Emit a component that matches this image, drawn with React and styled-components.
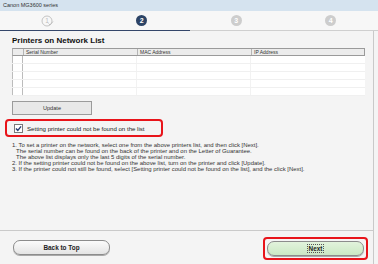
import React from "react";
import styled, { createGlobalStyle } from "styled-components";

const GlobalStyle = createGlobalStyle`
  html, body {
    margin: 0;
    padding: 0;
    background: #f4f4f4;
  }
  body {
    width: 378px;
    height: 264px;
    overflow: hidden;
    font-family: "Liberation Sans", Arial, sans-serif;
    color: #222;
  }
  * { box-sizing: border-box; }
`;

const Window = styled.div`
  width: 378px;
  height: 264px;
  display: flex;
  flex-direction: column;
  background: #f4f4f4;
`;

const TitleBar = styled.div`
  flex: none;
  height: 11px;
  background: #d5e3ef;
  font-size: 5.5px;
  line-height: 11px;
  padding-left: 3px;
  color: #333;
`;

const Steps = styled.div`
  flex: none;
  height: 20px;
  display: grid;
  grid-template-columns: repeat(4, 1fr);
  align-items: center;
  justify-items: center;
  background: #f7f7f7;
  border-bottom: 1px solid #cfcfcf;
  position: relative;
`;

const Progress = styled.div`
  position: absolute;
  left: 0;
  bottom: -1px;
  width: 190px;
  height: 1px;
  background: #34466a;
`;

const StepDot = styled.div`
  width: 11px;
  height: 11px;
  border-radius: 50%;
  background: ${(p) => (p.$active ? "#2d4466" : "#cdcdcd")};
  color: #fff;
  font-size: 7px;
  font-weight: bold;
  display: flex;
  align-items: center;
  justify-content: center;
`;

const Body = styled.div`
  flex: none;
  height: 199px;
  display: flex;
  flex-direction: column;
  border-right: 1px solid #c9c9c9;
  margin-right: 4px;
  padding: 0 8px 0 12px;
`;

const Heading = styled.div`
  font-size: 8px;
  font-weight: bold;
  margin-top: 4px;
  height: 12px;
  line-height: 12px;
  color: #111;
`;

const Table = styled.div`
  margin-top: 1px;
  width: 353px;
  display: flex;
  flex-direction: column;
`;

const HeadRow = styled.div`
  display: grid;
  grid-template-columns: 10px 114px 114px 1fr;
  height: 8px;
  background: #ececec;
  border: 1px solid #9a9a9a;
  border-left-color: #b0b0b0;
`;

const HeadCell = styled.div`
  font-size: 5px;
  line-height: 6px;
  padding-left: 2px;
  border-left: ${(p) => (p.$first ? "none" : "1px solid #b5b5b5")};
  color: #333;
`;

const Row = styled.div`
  display: grid;
  grid-template-columns: 10px 114px 114px 1fr;
  height: 8px;
  background: #fff;
  border-bottom: 1px solid #f0f0f0;
`;

const Cell = styled.div`
  border-left: ${(p) => (p.$edge ? "1px solid #bcbcbc" : "1px solid #f2f2f2")};
`;

const UpdateButton = styled.div`
  margin-top: 5px;
  width: 80px;
  height: 14px;
  border: 1px solid #9b9b9b;
  background: #e8e8e8;
  font-size: 5.6px;
  line-height: 12px;
  text-align: center;
  color: #333;
`;

const Highlight = styled.div`
  margin: 4px 0 0 -7px;
  width: 158px;
  height: 18px;
  border: 2px solid #e8141a;
  border-radius: 4px;
  display: flex;
  align-items: center;
  gap: 4px;
  padding-left: 7px;
`;

const CheckBox = styled.div`
  width: 9px;
  height: 9px;
  border: 1px solid #7a7a7a;
  background: #fff;
  display: flex;
  align-items: center;
  justify-content: center;
`;

const CheckLabel = styled.span`
  font-size: 6.1px;
  color: #222;
`;

const Notes = styled.div`
  margin-top: 5px;
  font-size: 5.95px;
  line-height: 6px;
  color: #333;
`;

const Note = styled.div`
  padding-left: ${(p) => (p.$indent ? "4px" : "0")};
  white-space: nowrap;
`;

const Footer = styled.div`
  flex: none;
  height: 34px;
  border-top: 1px solid #cacaca;
  border-right: 1px solid #c9c9c9;
  margin-right: 4px;
  display: flex;
  align-items: center;
  justify-content: space-between;
  padding: 0 5px 0 13px;
`;

const PillButton = styled.div`
  width: ${(p) => p.$w}px;
  height: 15px;
  border-radius: 7px;
  border: 1px solid #8c8c8c;
  background: ${(p) =>
    p.$green
      ? "linear-gradient(#e2f3dc, #cbe8c4)"
      : "linear-gradient(#fbfbfb, #e4e4e4)"};
  box-shadow: 0 1px 0 #a9a9a9;
  font-size: 6.4px;
  font-weight: bold;
  line-height: 13px;
  text-align: center;
  color: #222;
`;

const NextFrame = styled.div`
  padding: 2px;
  border: 2px solid #e8141a;
  border-radius: 4px;
  margin-top: 1px;
`;

const FocusText = styled.span`
  outline: 1px dotted #555;
  padding: 0 1px;
`;

const FirstStep = () => (
  <svg width="13" height="12" viewBox="0 0 13 12">
    <circle cx="6" cy="6" r="5" fill="none" stroke="#bdbdbd" strokeWidth="0.9" />
    <text x="4.3" y="8.3" fontSize="6.5" fill="#bdbdbd" fontFamily="Liberation Sans">1</text>
    <path d="M7.5 8.5 L9 10 L12 6.5" fill="none" stroke="#bdbdbd" strokeWidth="0.9" />
  </svg>
);

const notes = [
  ["1. To set a printer on the network, select one from the above printers list, and then click [Next].", false],
  ["The serial number can be found on the back of the printer and on the Letter of Guarantee.", true],
  ["The above list displays only the last 5 digits of the serial number.", true],
  ["2. If the setting printer could not be found on the above list, turn on the printer and click [Update].", false],
  ["3. If the printer could not still be found, select [Setting printer could not be found on the list], and the click [Next].", false],
];

export default function App() {
  return (
    <Window>
      <GlobalStyle />
      <TitleBar>Canon MG3600 series</TitleBar>
      <Steps>
        <FirstStep />
        <StepDot $active>2</StepDot>
        <StepDot>3</StepDot>
        <StepDot>4</StepDot>
        <Progress />
      </Steps>
      <Body>
        <Heading>Printers on Network List</Heading>
        <Table>
          <HeadRow>
            <HeadCell $first />
            <HeadCell>Serial Number</HeadCell>
            <HeadCell>MAC Address</HeadCell>
            <HeadCell>IP Address</HeadCell>
          </HeadRow>
          {[0, 1, 2, 3, 4].map((i) => (
            <Row key={i}>
              <Cell $edge />
              <Cell $edge />
              <Cell />
              <Cell />
            </Row>
          ))}
        </Table>
        <UpdateButton>Update</UpdateButton>
        <Highlight>
          <CheckBox>
            <svg width="7" height="7" viewBox="0 0 6 6">
              <path d="M0.8 3 L2.4 4.6 L5.2 1.2" fill="none" stroke="#2a3f73" strokeWidth="1.2" />
            </svg>
          </CheckBox>
          <CheckLabel>Setting printer could not be found on the list</CheckLabel>
        </Highlight>
        <Notes>
          {notes.map(([t, indent], i) => (
            <Note key={i} $indent={indent}>{t}</Note>
          ))}
        </Notes>
      </Body>
      <Footer>
        <PillButton $w={97}>Back to Top</PillButton>
        <NextFrame>
          <PillButton $w={97} $green>
            <FocusText>Next</FocusText>
          </PillButton>
        </NextFrame>
      </Footer>
    </Window>
  );
}
